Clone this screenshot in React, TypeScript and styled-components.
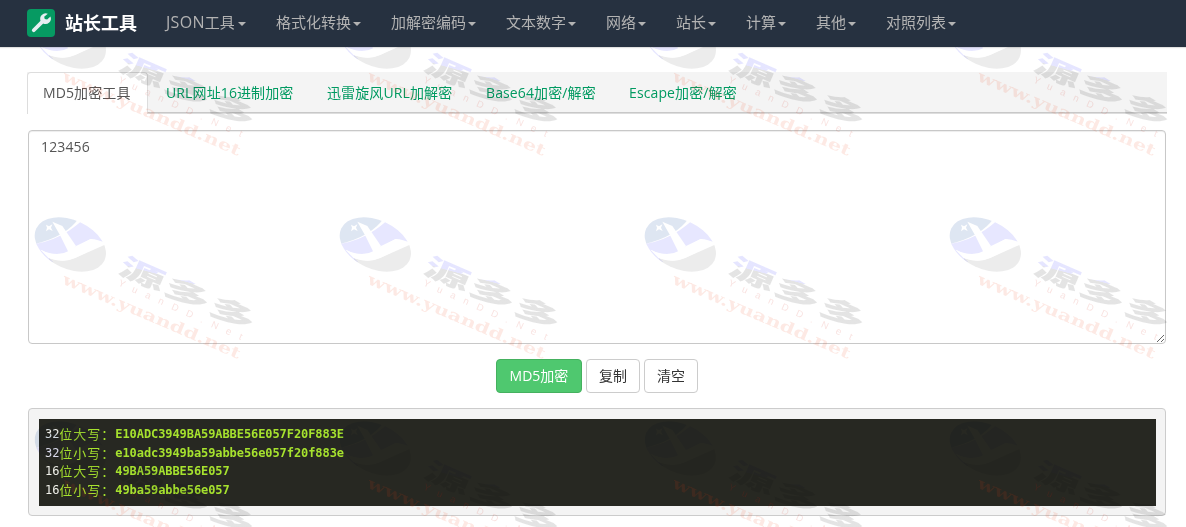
import React from "react";
import styled, { createGlobalStyle } from "styled-components";

const GlobalStyle = createGlobalStyle`
  * { box-sizing: border-box; }
  html, body { margin: 0; overflow: hidden; }
  body {
    background: #fff;
    color: #333;
    font: 14px/20px "Open Sans", "Noto Sans CJK SC", sans-serif;
  }
`;

const Page = styled.div`
  position: relative;
  height: 527px;
  overflow: hidden;
  background: #fff;
`;

const Navbar = styled.header`
  display: flex;
  align-items: center;
  height: 47px;
  padding-left: 27px;
  background: #263140;
  box-shadow: 0 1px 1px rgba(0, 0, 0, 0.12);
`;

const Brand = styled.div`
  display: flex;
  align-items: center;
  gap: 10px;
  width: 124px;
  color: #fff;
  font-size: 18px;
  font-weight: 700;
  white-space: nowrap;
`;

const BrandName = styled.span`
  padding-bottom: 2px;
`;

const LogoBox = styled.span`
  display: flex;
  align-items: center;
  justify-content: center;
  width: 28px;
  height: 28px;
  margin-bottom: 1px;
  border-radius: 4px;
  background: #069a62;
`;

const Menu = styled.nav`
  display: flex;
  padding-bottom: 3px;
`;

const MenuItem = styled.a<{ $width: number }>`
  display: flex;
  align-items: center;
  justify-content: space-between;
  width: ${(p) => p.$width}px;
  margin: 0 15px;
  color: #b3b3b3;
  font-size: 15px;
  white-space: nowrap;
`;

const Latin = styled.span`
  font-size: 16px;
  letter-spacing: 0.3px;
`;

const Caret = styled.span`
  border: 4px solid transparent;
  border-top-color: currentColor;
  border-bottom: 0;
  margin-top: 4px;
`;

const Tabs = styled.div`
  display: flex;
  gap: 2px;
  height: 42px;
  margin: 25px 19px 0 27px;
  background: #f4f4f4;
  box-shadow: inset 0 -1px #ddd, inset 0 -2px #c8c8c8;
`;

const Tab = styled.a<{ $width: number; $active?: boolean }>`
  width: ${(p) => p.$width + 32}px;
  height: 42px;
  padding: 10px 15px;
  border: 1px solid ${(p) => (p.$active ? "#ddd" : "transparent")};
  border-bottom: 0;
  border-radius: 4px 4px 0 0;
  background: ${(p) => (p.$active ? "#fff" : "transparent")};
  color: ${(p) => (p.$active ? "#555" : "#009a61")};
  letter-spacing: 0.12px;
  white-space: nowrap;
`;

const Panel = styled.main`
  padding: 16px 20px 0 28px;
`;

const Input = styled.textarea`
  display: block;
  width: 1138px;
  height: 214px;
  padding: 6px 12px;
  border: 1px solid #c8c8c8;
  border-radius: 4px;
  outline: 0;
  background: #fff;
  box-shadow: inset 0 1px 1px rgba(0, 0, 0, 0.075);
  color: #555;
  font: inherit;
  letter-spacing: 0.15px;
`;

const Actions = styled.div`
  display: flex;
  justify-content: center;
  gap: 4px;
  margin-top: 15px;
`;

const Button = styled.button<{ $primary?: boolean }>`
  width: ${(p) => (p.$primary ? 86 : 54)}px;
  height: 34px;
  padding: 0;
  border: 1px solid ${(p) => (p.$primary ? "#45b15f" : "#ccc")};
  border-radius: 4px;
  background: ${(p) => (p.$primary ? "#4fc86f" : "#fff")};
  color: ${(p) => (p.$primary ? "#fff" : "#333")};
  font: inherit;
  white-space: nowrap;
`;

const ResultFrame = styled.div`
  height: 108px;
  margin-top: 15px;
  padding: 10px 9px 9px 10px;
  border: 1px solid #ccc;
  border-radius: 4px;
  background: #f4f4f4;
`;

const Result = styled.div`
  height: 87px;
  padding: 6px 6px 5px;
  background: #272822;
  color: #f0f0ea;
  font: 12px/18.7px "DejaVu Sans Mono", "Noto Sans CJK SC", monospace;
  letter-spacing: -0.08px;
`;

const ResultLine = styled.div`
  display: flex;
  height: 18.7px;
`;

const Label = styled.span`
  width: 56px;
  color: #a6e22e;
  font: 13px/18.7px "Noto Sans CJK SC", sans-serif;
  letter-spacing: 1px;
  white-space: nowrap;
`;

const Hash = styled.span`
  color: #a6e22e;
  font-weight: 700;
`;

const Overlay = styled.svg<{ $multiply?: boolean }>`
  position: absolute;
  top: 47px;
  left: 0;
  pointer-events: none;
  mix-blend-mode: ${(p) => (p.$multiply ? "multiply" : "normal")};
`;

const menu: { label: string; latin?: string; width: number }[] = [
  { latin: "JSON", label: "工具", width: 80 },
  { label: "格式化转换", width: 85 },
  { label: "加解密编码", width: 85 },
  { label: "文本数字", width: 70 },
  { label: "网络", width: 40 },
  { label: "站长", width: 40 },
  { label: "计算", width: 40 },
  { label: "其他", width: 40 },
  { label: "对照列表", width: 70 },
];

const tabs = [
  { label: "MD5加密工具", width: 89 },
  { label: "URL网址16进制加密", width: 127 },
  { label: "迅雷旋风URL加解密", width: 125 },
  { label: "Base64加密/解密", width: 109 },
  { label: "Escape加密/解密", width: 109 },
];

const results = [
  { bits: "32", label: "位大写：", hash: "E10ADC3949BA59ABBE56E057F20F883E" },
  { bits: "32", label: "位小写：", hash: "e10adc3949ba59abbe56e057f20f883e" },
  { bits: "16", label: "位大写：", hash: "49BA59ABBE56E057" },
  { bits: "16", label: "位小写：", hash: "49ba59abbe56e057" },
];

const Wrench = () => (
  <svg width="22" height="22" viewBox="0 0 20 20">
    <path d="M3.4 16.6 11.5 8.5" stroke="#e6eef2" strokeWidth="3.4" strokeLinecap="round" />
    <path
      d="M16.2 1.6A5 5 0 0 0 9.7 8.2l2.3 2.3A5 5 0 0 0 18.6 4l-3 2.9-2.2-.5-.5-2.1Z"
      fill="#e6eef2"
    />
  </svg>
);

const Emblem = () => (
  <>
    <g clipPath="url(#emblem)" mask="url(#cutout)">
      <path d="M30 40H185Q150 108 40 133Z" fill="#003f9a" fillOpacity=".13" />
      <path
        d="M40 133Q100 124 150 90T185 50L270 60V125L246 128 212 117 168 138 147 153Q110 176 62 149L100 187 40 190Z"
        fill="#1010ff"
        fillOpacity=".1"
      />
      <path
        d="M258 129 165 174Q130 190 86 174L110 240H280V125Z"
        fill="#303030"
        fillOpacity=".095"
      />
    </g>
    <text
      transform="translate(291 219) rotate(23.5) scale(2.05 1.12)"
      fontFamily="Noto Sans CJK SC, sans-serif"
      fontSize="69"
      fontWeight="900"
      textLength="213"
      fill="url(#ink)"
    >
      源多多
    </text>
  </>
);

const Address = () => (
  <>
    <text
      transform="translate(293 256) rotate(24)"
      fontFamily="Liberation Sans, sans-serif"
      fontSize="29"
      textLength="404"
      fill="#d02010"
      fillOpacity=".13"
    >
      YuanDD.Net
    </text>
    <text
      transform="translate(124 250) rotate(23.2)"
      fontFamily="DejaVu Serif, serif"
      fontSize="46"
      fontWeight="700"
      textLength="577"
      lengthAdjust="spacingAndGlyphs"
      fill="#f04010"
      fillOpacity=".115"
    >
      www.yuandd.net
    </text>
  </>
);

const tiles = [-3, 200, 404].flatMap((y) => [20, 325, 630, 935].map((x) => ({ x, y })));

const Tiled = ({ href }: { href: string }) => (
  <>
    {tiles.map(({ x, y }) => (
      <use key={`${x}-${y}`} href={href} transform={`translate(${x} ${y}) scale(.33333)`} />
    ))}
  </>
);

const Watermark = () => (
  <>
    <Overlay $multiply width="1186" height="480" viewBox="0 47 1186 480">
      <defs>
        <linearGradient id="ink" gradientUnits="userSpaceOnUse" x1="20" y1="-70" x2="40" y2="4">
          <stop offset=".48" stopColor="#1515ff" stopOpacity=".11" />
          <stop offset=".5" stopColor="#202020" stopOpacity=".12" />
        </linearGradient>
        <clipPath id="emblem">
          <ellipse rx="113" ry="73" transform="translate(151 133.5) rotate(25)" />
        </clipPath>
        <mask id="cutout" maskUnits="userSpaceOnUse" x="0" y="0" width="300" height="260">
          <rect width="300" height="260" fill="#fff" />
          <path d="M97 65 127 78 168 138 147 160 121 107Z" />
          <path d="M62 149Q110 173 147 153L212 117Q235 118 262 131L165 174Q130 190 86 174Z" />
          <path d="m78 74 9 5 10-6-4 10 5 10-11-5-9 6 3-11Z" />
        </mask>
        <g id="stamp-emblem">
          <Emblem />
        </g>
      </defs>
      <Tiled href="#stamp-emblem" />
    </Overlay>
    <Overlay width="1186" height="480" viewBox="0 47 1186 480">
      <defs>
        <g id="stamp-address">
          <Address />
        </g>
      </defs>
      <Tiled href="#stamp-address" />
    </Overlay>
  </>
);

export default function App() {
  return (
    <Page>
      <GlobalStyle />
      <Navbar>
        <Brand>
          <LogoBox>
            <Wrench />
          </LogoBox>
          <BrandName>站长工具</BrandName>
        </Brand>
        <Menu>
          {menu.map((m) => (
            <MenuItem key={m.label} $width={m.width}>
              <span>
                {m.latin && <Latin>{m.latin}</Latin>}
                {m.label}
              </span>
              <Caret />
            </MenuItem>
          ))}
        </Menu>
      </Navbar>
      <Tabs>
        {tabs.map((t, i) => (
          <Tab key={t.label} $width={t.width} $active={i === 0}>
            {t.label}
          </Tab>
        ))}
      </Tabs>
      <Panel>
        <Input defaultValue="123456" />
        <Actions>
          <Button $primary>MD5加密</Button>
          <Button>复制</Button>
          <Button>清空</Button>
        </Actions>
        <ResultFrame>
          <Result>
            {results.map((r) => (
              <ResultLine key={r.hash}>
                {r.bits}
                <Label>{r.label}</Label>
                <Hash>{r.hash}</Hash>
              </ResultLine>
            ))}
          </Result>
        </ResultFrame>
      </Panel>
      <Watermark />
    </Page>
  );
}
